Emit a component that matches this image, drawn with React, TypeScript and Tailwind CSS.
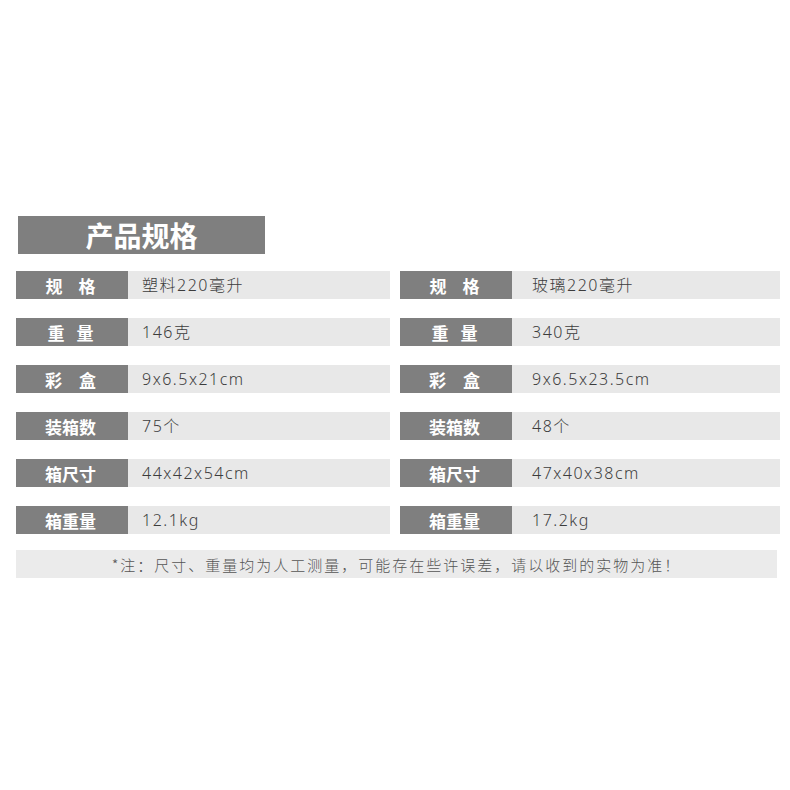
import React from "react";

const left = [
  { label: ["规", "格"], gap: "gap-[16px]", value: "塑料220毫升" },
  { label: ["重", "量"], gap: "gap-[12px]", value: "146克" },
  { label: ["彩", "盒"], gap: "gap-[17px]", value: "9x6.5x21cm" },
  { label: ["装箱数"], gap: "", value: "75个" },
  { label: ["箱尺寸"], gap: "", value: "44x42x54cm" },
  { label: ["箱重量"], gap: "", value: "12.1kg" },
];
const right = [
  { label: ["规", "格"], gap: "gap-[16px]", value: "玻璃220毫升" },
  { label: ["重", "量"], gap: "gap-[12px]", value: "340克" },
  { label: ["彩", "盒"], gap: "gap-[17px]", value: "9x6.5x23.5cm" },
  { label: ["装箱数"], gap: "", value: "48个" },
  { label: ["箱尺寸"], gap: "", value: "47x40x38cm" },
  { label: ["箱重量"], gap: "", value: "17.2kg" },
];

function Row({ item, valueW, pad }: { item: { label: string[]; gap: string; value: string }; valueW: string; pad: string }) {
  return (
    <div className="flex h-[28px]">
      <div className={`w-[112px] h-full bg-[#7f7f7f] flex items-center justify-center ${item.gap} text-white font-bold text-[17px] leading-none pr-[3px]`}>
        {item.label.map((c, i) => (
          <span key={i}>{c}</span>
        ))}
      </div>
      <div
        className={`${valueW} h-full bg-[#e8e8e8] flex items-center ${pad} text-[#3c3c3c] font-light text-[16px] tracking-[1.5px] leading-none`}
        style={{ fontFamily: '"Noto Sans", "Noto Sans CJK SC", sans-serif' }}
      >
        {item.value}
      </div>
    </div>
  );
}

export default function App() {
  return (
    <div
      className="w-[790px] h-[790px] bg-white pt-[216px] pl-[16px]"
      style={{ fontFamily: '"Noto Sans CJK SC", "Noto Sans", sans-serif' }}
    >
      <div className="ml-[2px] w-[247px] h-[38px] bg-[#7f7f7f] flex items-center justify-center text-white font-bold text-[28px] leading-none">
        产品规格
      </div>
      <div className="mt-[17px] flex gap-[10px]">
        <div className="flex flex-col gap-[19px]">
          {left.map((it, i) => (
            <Row key={i} item={it} valueW="w-[262px]" pad="pl-[14px]" />
          ))}
        </div>
        <div className="flex flex-col gap-[19px]">
          {right.map((it, i) => (
            <Row key={i} item={it} valueW="w-[268px]" pad="pl-[20px]" />
          ))}
        </div>
      </div>
      <div className="mt-[16px] w-[761px] h-[28px] bg-[#ebebeb] flex items-center justify-center text-[15px] tracking-[2px] text-[#555] font-light leading-none">
        *注：尺寸、重量均为人工测量，可能存在些许误差，请以收到的实物为准！
      </div>
    </div>
  );
}
